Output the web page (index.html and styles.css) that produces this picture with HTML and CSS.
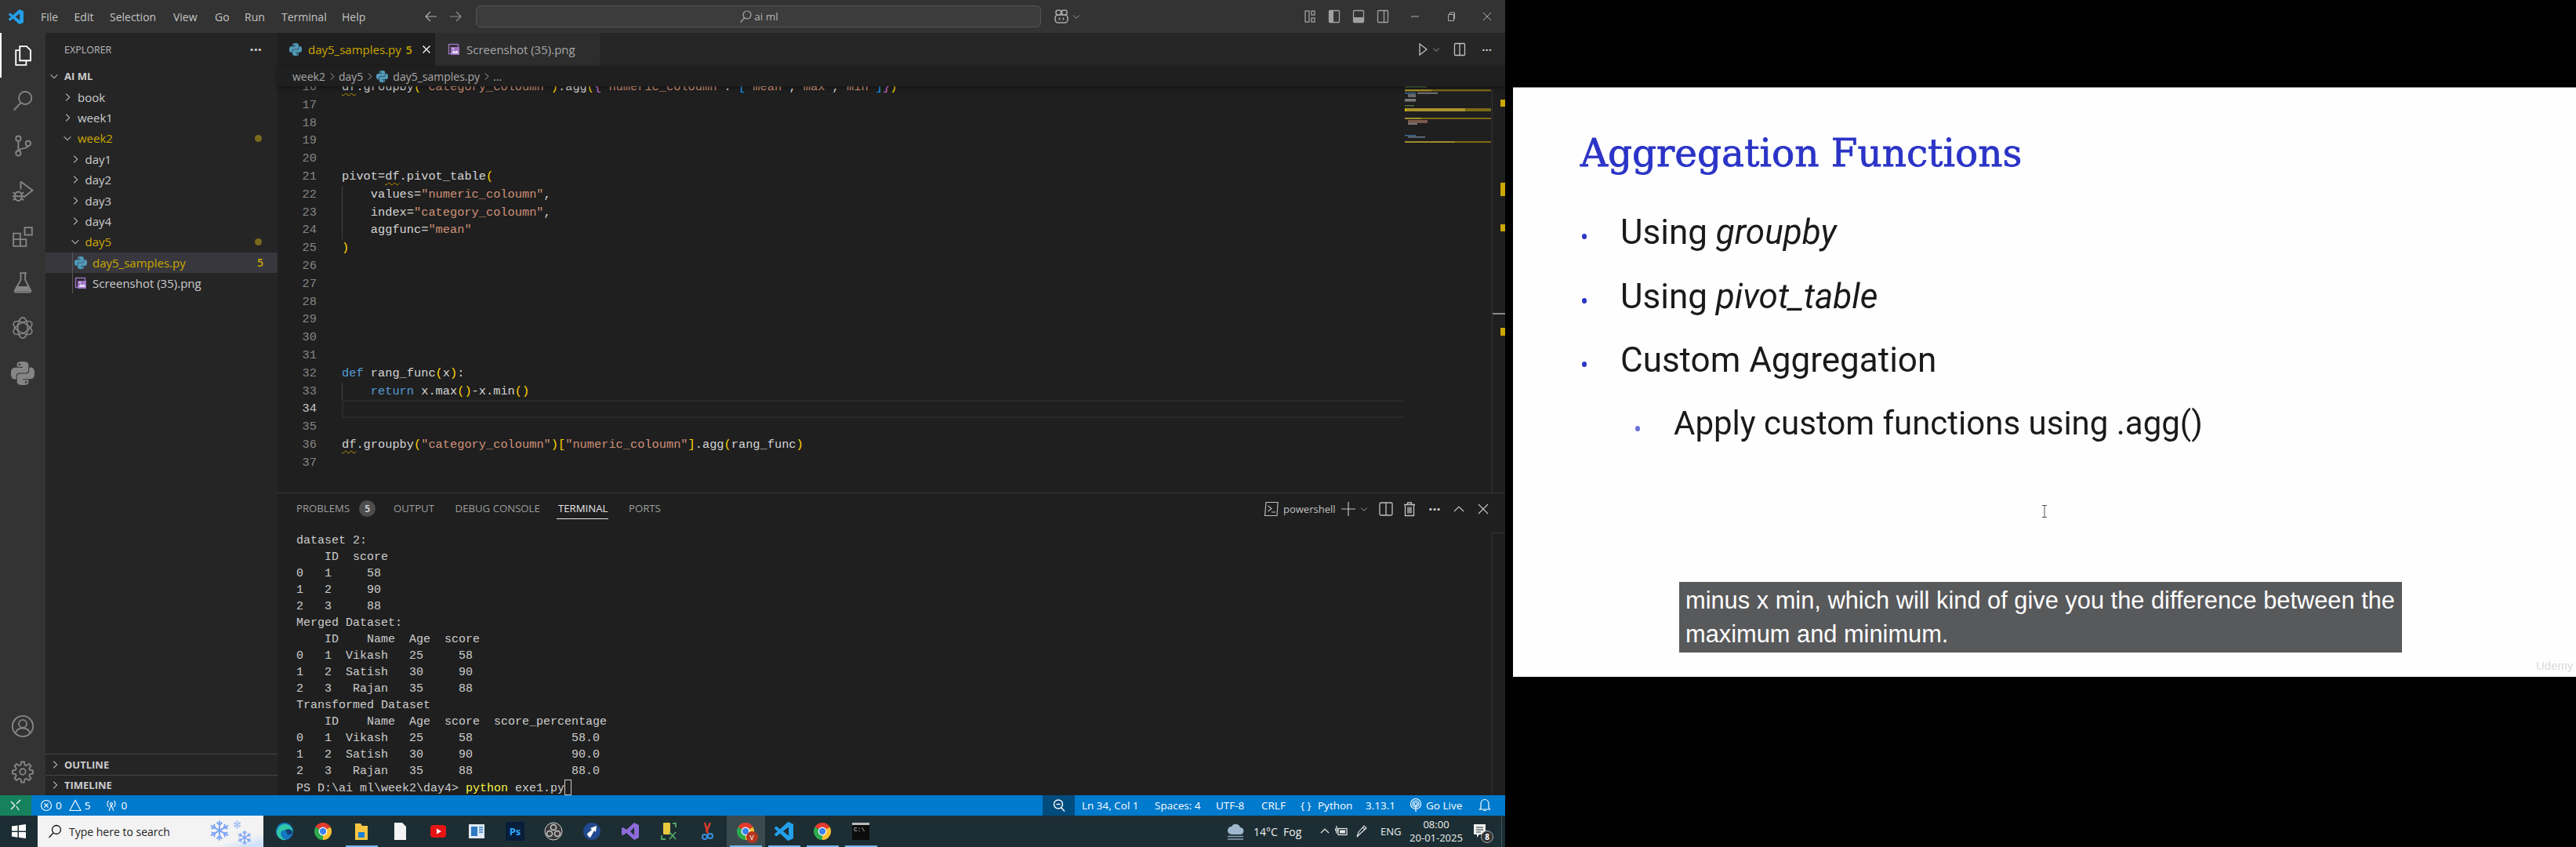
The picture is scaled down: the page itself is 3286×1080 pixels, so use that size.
FILE: index.html
```html
<!DOCTYPE html>
<html lang="en">
<head>
<meta charset="utf-8">
<title>day5_samples.py - AI ML</title>
<link rel="stylesheet" href="styles.css">
</head>
<body>
<svg class="defs" aria-hidden="true">
  <symbol id="py" viewBox="0 0 24 24"><path d="M14.25.18l.9.2.73.26.59.3.45.32.34.34.25.34.16.33.1.3.04.26.02.2-.01.13V8.5l-.05.63-.13.55-.21.46-.26.38-.3.31-.33.25-.35.19-.35.14-.33.1-.3.07-.26.04-.21.02H8.77l-.69.05-.59.14-.5.22-.41.27-.33.32-.27.35-.2.36-.15.37-.1.35-.07.32-.04.27-.02.21v3.06H3.17l-.21-.03-.28-.07-.32-.12-.35-.18-.36-.26-.36-.36-.35-.46-.32-.59-.28-.73-.21-.88-.14-1.05-.05-1.23.06-1.22.16-1.04.24-.87.32-.71.36-.57.4-.44.42-.33.42-.24.4-.16.36-.1.32-.05.24-.01h.16l.06.01h8.16v-.83H6.18l-.01-2.75-.02-.37.05-.34.11-.31.17-.28.25-.26.31-.23.38-.2.44-.18.51-.15.58-.12.64-.1.71-.06.77-.04.84-.02 1.27.05zm-6.3 1.98l-.23.33-.08.41.08.41.23.34.33.22.41.09.41-.09.33-.22.23-.34.08-.41-.08-.41-.23-.33-.33-.22-.41-.09-.41.09zm13.09 3.95l.28.06.32.12.35.18.36.27.36.35.35.47.32.59.28.73.21.88.14 1.04.05 1.23-.06 1.23-.16 1.04-.24.86-.32.71-.36.57-.4.45-.42.33-.42.24-.4.16-.36.09-.32.05-.24.02-.16-.01h-8.22v.82h5.84l.01 2.76.02.36-.05.34-.11.31-.17.29-.25.25-.31.24-.38.2-.44.17-.51.15-.58.13-.64.09-.71.07-.77.04-.84.01-1.27-.04-1.07-.14-.9-.2-.73-.25-.59-.3-.45-.33-.34-.34-.25-.34-.16-.33-.1-.3-.04-.25-.02-.2.01-.13v-5.34l.05-.64.13-.54.21-.46.26-.38.3-.32.33-.24.35-.2.35-.14.33-.1.3-.06.26-.04.21-.02.13-.01h5.84l.69-.05.59-.14.5-.21.41-.28.33-.32.27-.35.2-.36.15-.36.1-.35.07-.32.04-.28.02-.21V6.07h2.09l.14.01zm-6.47 14.25l-.23.33-.08.41.08.41.23.33.33.23.41.08.41-.08.33-.23.23-.33.08-.41-.08-.41-.23-.33-.33-.23-.41-.08-.41.08z"/></symbol>
  <symbol id="vsc" viewBox="0 0 24 24"><path d="M23.15 2.587L18.21.21a1.494 1.494 0 0 0-1.705.29l-9.46 8.63-4.12-3.128a.999.999 0 0 0-1.276.057L.327 7.261A1 1 0 0 0 .326 8.74L3.899 12 .326 15.26a1 1 0 0 0 .001 1.479L1.65 17.94a.999.999 0 0 0 1.276.057l4.12-3.128 9.46 8.63a1.492 1.492 0 0 0 1.704.29l4.942-2.377A1.5 1.5 0 0 0 24 20.06V3.939a1.5 1.5 0 0 0-.85-1.352zm-5.146 14.861L10.826 12l7.178-5.448v10.896z"/></symbol>
  <symbol id="cr" viewBox="0 0 16 16"><path d="M6 3l5 5-5 5" fill="none" stroke="currentColor" stroke-width="1.2"/></symbol>
  <symbol id="cd" viewBox="0 0 16 16"><path d="M3 6l5 5 5-5" fill="none" stroke="currentColor" stroke-width="1.2"/></symbol>
  <symbol id="img" viewBox="0 0 16 16"><rect x="1.5" y="1.5" width="12" height="12" fill="none" stroke="#a074c4" stroke-width="1.4"/><rect x="4" y="5" width="11" height="10" fill="#a074c4"/><path d="M5 13l3-4 2 2 2-2 2 4z" fill="#e6dcf2"/><circle cx="7" cy="7" r="1" fill="#e6dcf2"/></symbol>
  <symbol id="chrome" viewBox="0 0 24 24"><path d="M12 12L2.47 6.5A11 11 0 0 1 21.53 6.5z" fill="#e33b2e"/><path d="M12 12l9.53-5.5A11 11 0 0 1 12 23z" fill="#fbc02d"/><path d="M12 12v11A11 11 0 0 1 2.47 6.5z" fill="#2da94f"/><circle cx="12" cy="12" r="5.4" fill="#fff"/><circle cx="12" cy="12" r="4.2" fill="#3b82f0"/></symbol>
  <symbol id="flake" viewBox="0 0 24 24"><g stroke="currentColor" stroke-width="1.6" fill="none"><path d="M12 1v22M2.5 6.5l19 11M21.5 6.5l-19 11"/><path d="M9 3l3 3 3-3M9 21l3-3 3 3M3 10l4-1-1-4M21 14l-4 1 1 4M21 10l-4-1 1-4M3 14l4 1-1 4"/></g></symbol>
</svg>

<div class="vscode">
  <header class="titlebar">
    <div class="logo"><svg class="logo-svg"><use href="#vsc"/></svg></div>
    <nav class="menu"><span>File</span><span>Edit</span><span>Selection</span><span>View</span><span>Go</span><span>Run</span><span>Terminal</span><span>Help</span></nav>
    <div class="nav-arrows">
      <svg class="ico18" viewBox="0 0 18 18"><path d="M16 9H2M8 3L2 9l6 6" fill="none" stroke="#b0b0b0" stroke-width="1.2"/></svg>
      <svg class="ico18 dim" viewBox="0 0 18 18"><path d="M2 9h14M10 3l6 6-6 6" fill="none" stroke="#b0b0b0" stroke-width="1.2"/></svg>
    </div>
    <div class="searchbox">
      <svg class="ico18" viewBox="0 0 18 18"><circle cx="11" cy="7" r="5" fill="none" stroke="#a8a8a8" stroke-width="1.2"/><path d="M7.5 11L2.5 16.5" stroke="#a8a8a8" stroke-width="1.2"/></svg>
      <span>ai ml</span>
    </div>
    <div class="copilot">
      <svg class="ico22" viewBox="0 0 22 22"><g fill="none" stroke="#a8a8a8" stroke-width="1.6"><rect x="3" y="9" width="16" height="10" rx="4"/><rect x="4" y="3" width="6.5" height="6" rx="2.5"/><rect x="11.5" y="3" width="6.5" height="6" rx="2.5"/><path d="M8.5 12.5v3M13.5 12.5v3"/></g></svg>
      <svg class="ico12 c-grey"><use href="#cd"/></svg>
    </div>
    <div class="win-group">
      <div class="layout-btn"><svg class="ico20" viewBox="0 0 20 20"><g fill="none" stroke="#a0a0a0" stroke-width="1.3"><rect x="4" y="3" width="5" height="14"/><rect x="12" y="3" width="4" height="5"/><rect x="12" y="12" width="4" height="5"/></g></svg></div>
      <div class="layout-btn"><svg class="ico20" viewBox="0 0 20 20"><rect x="3.5" y="2.5" width="13" height="15" rx="1" fill="none" stroke="#a0a0a0" stroke-width="1.3"/><rect x="4" y="3" width="5" height="14" fill="#a0a0a0"/></svg></div>
      <div class="layout-btn"><svg class="ico20" viewBox="0 0 20 20"><rect x="3.5" y="2.5" width="13" height="15" rx="1" fill="none" stroke="#a0a0a0" stroke-width="1.3"/><rect x="4" y="11" width="12" height="6" fill="#a0a0a0"/></svg></div>
      <div class="layout-btn"><svg class="ico20" viewBox="0 0 20 20"><rect x="3.5" y="2.5" width="13" height="15" rx="1" fill="none" stroke="#a0a0a0" stroke-width="1.3"/><path d="M11.5 3v14" stroke="#a0a0a0" stroke-width="1.3"/></svg></div>
      <div class="win-btn gap-l"><svg class="ico12" viewBox="0 0 12 12"><path d="M1 6h10" stroke="#b0b0b0"/></svg></div>
      <div class="win-btn"><svg class="ico12" viewBox="0 0 12 12"><path d="M2.5 3.5h7v8h-7zM4.5 3.5v-2.5h6v8h-1" fill="none" stroke="#b0b0b0"/></svg></div>
      <div class="win-btn"><svg class="ico12" viewBox="0 0 12 12"><path d="M1 1l10 10M11 1L1 11" stroke="#b0b0b0"/></svg></div>
    </div>
  </header>

  <div class="main">
    <aside class="activity">
      <div class="act-top">
        <div class="act on"><svg class="ico30" viewBox="0 0 24 24"><g fill="none" stroke="#fff" stroke-width="1.5"><path d="M9 2.5h7l4 4V17H9z"/><path d="M9 6.5H5v15h10.5V17"/></g></svg></div>
        <div class="act"><svg class="ico30" viewBox="0 0 24 24"><g fill="none" stroke="#858585" stroke-width="1.5"><circle cx="14.5" cy="9.5" r="6.5"/><path d="M10 14.5L3 22"/></g></svg></div>
        <div class="act"><svg class="ico30" viewBox="0 0 24 24"><g fill="none" stroke="#858585" stroke-width="1.5"><circle cx="7.5" cy="4.5" r="2.5"/><circle cx="7.5" cy="19.5" r="2.5"/><circle cx="17.5" cy="9.5" r="2.5"/><path d="M7.5 7v10M17.5 12c0 3.5-10 2-10 5"/></g></svg></div>
        <div class="act"><svg class="ico30" viewBox="0 0 24 24"><g fill="none" stroke="#858585" stroke-width="1.5"><path d="M10 2l12 9-9 7"/><path d="M10 2v8"/><ellipse cx="7.5" cy="17" rx="3.6" ry="4.6"/><path d="M2 13l3 2M2 21l3-2M13 13l-3 2M13 21l-3-2M1.5 17H4M11 17h2.5M4 17h7"/></g></svg></div>
        <div class="act"><svg class="ico30" viewBox="0 0 24 24"><g fill="none" stroke="#858585" stroke-width="1.5"><path d="M2.5 8.5h7v6h6v7h-13z"/><path d="M9.5 14.5v7M2.5 14.5h7"/><rect x="14" y="2.5" width="7.5" height="7.5"/></g></svg></div>
        <div class="act"><svg class="ico30" viewBox="0 0 24 24"><g fill="none" stroke="#858585" stroke-width="1.5"><path d="M9 2.500h7M10 2.500v7L4 20c-.6 1.100 0 2 1 2h14c1 0 1.600-.9 1-2L14.500 9.500v-7"/></g><path d="M6.500 16h11l2 5h-15z" fill="#858585"/></svg></div>
        <div class="act"><svg class="ico30" viewBox="0 0 24 24"><g fill="none" stroke="#858585" stroke-width="1.300"><ellipse cx="12" cy="12" rx="5" ry="10.500"/><ellipse cx="12" cy="12" rx="5" ry="10.500" transform="rotate(60 12 12)"/><ellipse cx="12" cy="12" rx="5" ry="10.500" transform="rotate(120 12 12)"/></g></svg></div>
        <div class="act"><svg class="ico30 c-act"><use href="#py"/></svg></div>
      </div>
      <div class="act-bottom">
        <div class="act"><svg class="ico30" viewBox="0 0 24 24"><g fill="none" stroke="#858585" stroke-width="1.500"><circle cx="12" cy="12" r="10.500"/><circle cx="12" cy="9.500" r="4"/><path d="M4.500 19c1-3.500 4-5 7.500-5s6.500 1.500 7.500 5"/></g></svg></div>
        <div class="act"><svg class="ico30" viewBox="0 0 24 24"><g fill="none" stroke="#858585" stroke-width="1.500"><path d="M10.500 2h3l.5 3 1.800.8 2.500-1.800 2.100 2.100-1.800 2.500.8 1.800 3 .5v3l-3 .5-.8 1.800 1.800 2.500-2.100 2.100-2.500-1.800-1.800.8-.5 3h-3l-.5-3-1.800-.8-2.500 1.800-2.100-2.100 1.800-2.500-.8-1.800-3-.5v-3l3-.5.8-1.800L3.600 6.100l2.100-2.100 2.500 1.800 1.800-.8z"/><circle cx="12" cy="12" r="3"/></g></svg></div>
      </div>
    </aside>

    <aside class="sidebar">
      <div class="side-head"><span>EXPLORER</span><span class="dots">···</span></div>
      <div class="row ind0 bold"><svg class="chev"><use href="#cd"/></svg><span>AI ML</span></div>
      <div class="row ind1"><svg class="chev"><use href="#cr"/></svg><span>book</span></div>
      <div class="row ind1"><svg class="chev"><use href="#cr"/></svg><span>week1</span></div>
      <div class="row ind1 mod"><svg class="chev"><use href="#cd"/></svg><span>week2</span><i class="dot"></i></div>
      <div class="row ind2"><svg class="chev"><use href="#cr"/></svg><span>day1</span></div>
      <div class="row ind2"><svg class="chev"><use href="#cr"/></svg><span>day2</span></div>
      <div class="row ind2"><svg class="chev"><use href="#cr"/></svg><span>day3</span></div>
      <div class="row ind2"><svg class="chev"><use href="#cr"/></svg><span>day4</span></div>
      <div class="row ind2 mod"><svg class="chev"><use href="#cd"/></svg><span>day5</span><i class="dot"></i></div>
      <div class="row ind3 mod sel"><svg class="ficon c-py"><use href="#py"/></svg><span>day5_samples.py</span><b class="count">5</b></div>
      <div class="row ind3"><svg class="ficon"><use href="#img"/></svg><span>Screenshot (35).png</span></div>
      <div class="side-space"></div>
      <div class="sec"><svg class="chev"><use href="#cr"/></svg><span>OUTLINE</span></div>
      <div class="sec"><svg class="chev"><use href="#cr"/></svg><span>TIMELINE</span></div>
    </aside>

    <section class="work">
      <div class="tabs">
        <div class="tab active mod"><svg class="ficon c-py"><use href="#py"/></svg><span>day5_samples.py</span><b class="tabcount">5</b><svg class="tabx" viewBox="0 0 12 12"><path d="M1.500 1.500l9 9M10.500 1.500l-9 9" stroke="#fff" stroke-width="1.300"/></svg></div>
        <div class="tab other"><svg class="ficon"><use href="#img"/></svg><span>Screenshot (35).png</span></div>
        <div class="tab-actions">
          <svg class="ico18" viewBox="0 0 18 18"><path d="M5 2l9 7-9 7z" fill="none" stroke="#c0c0c0" stroke-width="1.300"/></svg>
          <svg class="ico12 c-grey"><use href="#cd"/></svg>
          <svg class="ico18 split" viewBox="0 0 18 18"><rect x="2.500" y="1.500" width="13" height="15" rx="1" fill="none" stroke="#c0c0c0" stroke-width="1.300"/><path d="M9 2v14" stroke="#c0c0c0" stroke-width="1.300"/></svg>
          <span class="dots tight">···</span>
        </div>
      </div>
      <div class="crumbs"><span>week2</span><svg class="crumb-c"><use href="#cr"/></svg><span>day5</span><svg class="crumb-c"><use href="#cr"/></svg><svg class="ficon c-py"><use href="#py"/></svg><span>day5_samples.py</span><svg class="crumb-c"><use href="#cr"/></svg><span>...</span></div>

      <div class="editor">
        <div class="lines">
          <div class="ln"><span class="no">16</span><span class="code"><u>df</u>.groupby<y>(</y><s>"category_coloumn"</s><y>)</y>.agg<y>(</y><p>{</p><s>"numeric_coloumn"</s>: <a>[</a><s>"mean"</s>,<s>"max"</s>,<s>"min"</s><a>]</a><p>}</p><y>)</y></span></div>
          <div class="ln"><span class="no">17</span><span class="code"></span></div>
          <div class="ln"><span class="no">18</span><span class="code"></span></div>
          <div class="ln"><span class="no">19</span><span class="code"></span></div>
          <div class="ln"><span class="no">20</span><span class="code"></span></div>
          <div class="ln"><span class="no">21</span><span class="code">pivot=<u>df</u>.pivot_table<y>(</y></span></div>
          <div class="ln"><span class="no">22</span><span class="code guide">    values=<s>"numeric_coloumn"</s>,</span></div>
          <div class="ln"><span class="no">23</span><span class="code guide">    index=<s>"category_coloumn"</s>,</span></div>
          <div class="ln"><span class="no">24</span><span class="code guide">    aggfunc=<s>"mean"</s></span></div>
          <div class="ln"><span class="no">25</span><span class="code"><y>)</y></span></div>
          <div class="ln"><span class="no">26</span><span class="code"></span></div>
          <div class="ln"><span class="no">27</span><span class="code"></span></div>
          <div class="ln"><span class="no">28</span><span class="code"></span></div>
          <div class="ln"><span class="no">29</span><span class="code"></span></div>
          <div class="ln"><span class="no">30</span><span class="code"></span></div>
          <div class="ln"><span class="no">31</span><span class="code"></span></div>
          <div class="ln"><span class="no">32</span><span class="code"><k>def</k> rang_func<y>(</y>x<y>)</y>:</span></div>
          <div class="ln"><span class="no">33</span><span class="code guide">    <k>return</k> x.max<y>()</y>-x.min<y>()</y></span></div>
          <div class="ln current"><span class="no">34</span><span class="code"></span></div>
          <div class="ln"><span class="no">35</span><span class="code"></span></div>
          <div class="ln"><span class="no">36</span><span class="code"><u>df</u>.groupby<y>(</y><s>"category_coloumn"</s><y>)[</y><s>"numeric_coloumn"</s><y>]</y>.agg<y>(</y>rang_func<y>)</y></span></div>
          <div class="ln"><span class="no">37</span><span class="code"></span></div>
        </div>
        <svg class="minimap" viewBox="0 0 128 518">
          <rect x="0" y="0" width="28" height="1.500" fill="#4d6b3c"/>
          <rect x="0" y="4" width="110" height="2.300" fill="#7b6a14"/><rect x="0" y="4" width="34" height="2.300" fill="#a08c2a"/>
          <rect x="0" y="8" width="14" height="1.500" fill="#3f6c93"/><rect x="16" y="8" width="26" height="1.500" fill="#8a8a8a"/>
          <rect x="4" y="10" width="10" height="4" fill="#6a6a6a"/>
          <rect x="0" y="16" width="14" height="3.500" fill="#7a7a7a"/>
          <rect x="0" y="24" width="12" height="1.500" fill="#4d6b3c"/>
          <rect x="0" y="28" width="110" height="4" fill="#7b6a14"/><rect x="0" y="28" width="77" height="4" fill="#a8922c"/><rect x="0" y="28" width="2" height="4" fill="#d4b000"/>
          <rect x="0" y="40" width="110" height="2" fill="#7b6a14"/><rect x="0" y="40" width="21" height="2" fill="#a08c2a"/>
          <rect x="4" y="43" width="25" height="4" fill="#7a5a4c"/><rect x="4" y="47" width="12" height="2" fill="#777"/>
          <rect x="0" y="62" width="14" height="1.500" fill="#3f6c93"/><rect x="4" y="64" width="22" height="1.500" fill="#6f7f90"/>
          <rect x="0" y="70" width="110" height="2" fill="#7b6a14"/><rect x="0" y="70" width="64" height="2" fill="#a08c2a"/>
          <path d="M111.500 0V518" stroke="#333"/>
          <rect x="122" y="17" width="6" height="9" fill="#cca700"/>
          <rect x="122" y="123" width="6" height="17" fill="#cca700"/>
          <rect x="122" y="176" width="6" height="9" fill="#cca700"/>
          <rect x="112" y="289" width="16" height="2" fill="#8a8a8a"/>
          <rect x="122" y="308" width="6" height="10" fill="#cca700"/>
        </svg>
      </div>

      <div class="panel">
        <div class="panel-head">
          <div class="ptabs">
            <div class="ptab">PROBLEMS<b class="badge">5</b></div>
            <div class="ptab">OUTPUT</div>
            <div class="ptab">DEBUG CONSOLE</div>
            <div class="ptab on">TERMINAL</div>
            <div class="ptab">PORTS</div>
          </div>
          <div class="pacts">
            <svg class="ico20" viewBox="0 0 20 20"><g fill="none" stroke="#c0c0c0" stroke-width="1.100"><path d="M3 1.500h15l-1 17H1.500z"/><path d="M5.500 6l4.500 3.500-4.500 3.500M10 14h5"/></g></svg>
            <span class="pshell">powershell</span>
            <svg class="ico20 plus" viewBox="0 0 20 20"><path d="M10 1v18M1 10h18" stroke="#c0c0c0" stroke-width="1.200"/></svg>
            <svg class="ico12 c-grey pchev"><use href="#cd"/></svg>
            <svg class="ico20 psplit" viewBox="0 0 20 20"><rect x="2" y="2" width="16" height="16" rx="1.500" fill="none" stroke="#c0c0c0" stroke-width="1.300"/><path d="M10 2v16" stroke="#c0c0c0" stroke-width="1.300"/></svg>
            <svg class="ico20 ptrash" viewBox="0 0 20 20"><g fill="none" stroke="#c0c0c0" stroke-width="1.300"><path d="M3 4.500h14M7.500 4.500V2h5v2.500M4.500 4.500v14h11v-14M8 7.500v8M10 7.500v8M12 7.500v8"/></g></svg>
            <span class="dots pdots">···</span>
            <svg class="ico16 pup" viewBox="0 0 16 16"><path d="M2 11l6-6 6 6" fill="none" stroke="#c0c0c0" stroke-width="1.200"/></svg>
            <svg class="ico16 px" viewBox="0 0 16 16"><path d="M2 2l12 12M14 2L2 14" stroke="#c0c0c0" stroke-width="1.200"/></svg>
          </div>
        </div>
        <div class="term-wrap">
<pre class="term">dataset 2:
    ID  score
0   1     58
1   2     90
2   3     88
Merged Dataset:
    ID    Name  Age  score
0   1  Vikash   25     58
1   2  Satish   30     90
2   3   Rajan   35     88
Transformed Dataset
    ID    Name  Age  score  score_percentage
0   1  Vikash   25     58              58.0
1   2  Satish   30     90              90.0
2   3   Rajan   35     88              88.0
PS D:\ai ml\week2\day4&gt; <em>python</em> exe1.py<i class="cursor"></i></pre>
          <div class="term-rail"></div>
        </div>
      </div>
    </section>
  </div>

  <footer class="status">
    <div class="remote"><svg class="ico16" viewBox="0 0 16 16"><path d="M2 3l5 5-5 5M14 1L9 6M9 9l3 5" fill="none" stroke="#fff" stroke-width="1.200"/></svg></div>
    <div class="st-left">
      <svg class="ico16" viewBox="0 0 16 16"><g fill="none" stroke="#fff" stroke-width="1.100"><circle cx="8" cy="8" r="6.500"/><path d="M5.500 5.500l5 5M10.500 5.500l-5 5"/></g></svg><span>0</span>
      <svg class="ico16 st-gap" viewBox="0 0 16 16"><path d="M8 1.500L15 14.500H1z" fill="none" stroke="#fff" stroke-width="1.100"/></svg><span>5</span>
      <svg class="ico16 st-gap2" viewBox="0 0 16 16"><g fill="none" stroke="#fff" stroke-width="1.100"><circle cx="8" cy="6" r="1.500"/><path d="M8 7.500L5 15M8 7.500l3 7.500M4.500 2c-2 2-2 6 0 8M11.500 2c2 2 2 6 0 8"/></g></svg><span>0</span>
    </div>
    <div class="st-right">
      <div class="st-zoom"><svg class="ico18" viewBox="0 0 18 18"><g fill="none" stroke="#fff" stroke-width="1.400"><circle cx="8" cy="7.500" r="5.500"/><path d="M5.500 7.500h5M11.500 11.500l4.500 5"/></g></svg></div>
      <span>Ln 34, Col 1</span><span>Spaces: 4</span><span>UTF-8</span><span>CRLF</span><span>{ }</span><span>Python</span><span>3.13.1</span>
      <svg class="ico18" viewBox="0 0 18 18"><g fill="none" stroke="#fff" stroke-width="1.200"><circle cx="9" cy="7" r="2"/><circle cx="9" cy="7" r="4"/><circle cx="9" cy="7" r="6.500"/><path d="M9 9v8"/></g></svg>
      <span>Go Live</span>
      <svg class="ico18" viewBox="0 0 18 18"><path d="M9 1.500c-3 0-5 2.500-5 5.500v5l-1.500 2h13L14 12V7c0-3-2-5.500-5-5.500zM7.500 15.500h3" fill="none" stroke="#fff" stroke-width="1.200"/></svg>
    </div>
  </footer>

  <div class="taskbar">
    <div class="start"><svg class="ico20" viewBox="0 0 20 20"><path d="M1 3.500l7.500-1V9.500H1zM10 2.300L19 1v8.500h-9zM1 11h7.500v6.700L1 16.500zM10 11h9v8l-9-1.200z" fill="#fff"/></svg></div>
    <div class="tsearch">
      <svg class="ico20" viewBox="0 0 20 20"><g fill="none" stroke="#111" stroke-width="1.300"><circle cx="12" cy="8" r="5.500"/><path d="M8 12L2.500 18"/></g></svg>
      <span>Type here to search</span>
      <div class="flakes">
        <svg class="f1"><use href="#flake"/></svg>
        <svg class="f2"><use href="#flake"/></svg>
        <svg class="f3"><use href="#flake"/></svg>
      </div>
    </div>
    <div class="apps">
      <div class="app"><svg class="ico24" viewBox="0 0 24 24"><circle cx="12" cy="12" r="11" fill="#1277c4"/><path d="M2 13C3 6 9 2 14 3c5 1 9 5 8 11-1 3-4 3-6 2-2-1-1-4-4-5-4-1-6 3-4 7 1 2 3 4 6 5C7 24 2 19 2 13z" fill="#2fc7a8"/><path d="M22 14c-1 3-4 3-6 2-2-1-1-4-4-5 4-3 10-2 10 3z" fill="#123f78"/></svg></div>
      <div class="app"><svg class="ico24"><use href="#chrome"/></svg></div>
      <div class="app run"><svg class="ico24" viewBox="0 0 24 24"><path d="M4 2h7l2 3h7v18H4z" fill="#f5c542"/><rect x="8" y="13" width="8" height="7" fill="#1c7ed6"/></svg></div>
      <div class="app"><svg class="ico24" viewBox="0 0 24 24"><path d="M5 1h10l5 5v17H5z" fill="#f4f4f4"/></svg></div>
      <div class="app"><svg class="ico24" viewBox="0 0 24 24"><rect x="2" y="4" width="20" height="16" rx="4" fill="#e81515"/><path d="M10 8.500l6 3.500-6 3.500z" fill="#fff"/></svg></div>
      <div class="app"><svg class="ico24" viewBox="0 0 24 24"><rect x="2" y="3" width="20" height="18" fill="#dfe9f3"/><rect x="5" y="6" width="8" height="12" fill="#2b79c2"/><path d="M15 7h5M15 10h5M15 13h5" stroke="#2b79c2" stroke-width="1.500"/></svg></div>
      <div class="app"><span class="ps">Ps</span></div>
      <div class="app"><svg class="ico24" viewBox="0 0 24 24"><circle cx="12" cy="12" r="11" fill="#3a3a3a" stroke="#cfcfcf"/><circle cx="12" cy="7" r="3.500" fill="none" stroke="#cfcfcf" stroke-width="1.500"/><circle cx="7" cy="15" r="3.500" fill="none" stroke="#cfcfcf" stroke-width="1.500"/><circle cx="17" cy="15" r="3.500" fill="none" stroke="#cfcfcf" stroke-width="1.500"/></svg></div>
      <div class="app"><svg class="ico24" viewBox="0 0 24 24"><circle cx="12" cy="12" r="11" fill="#21498f"/><path d="M6 15l6-5-2-2 8-3-1 8-2-2-5 9c-2-1-4-3-4-5z" fill="#fff"/></svg></div>
      <div class="app"><svg class="ico24" viewBox="0 0 24 24"><path d="M17 1l6 3v16l-6 3L7 14l-4 3-2-1V8l2-1 4 3zM17 7l-5 5 5 5z" fill="#8e6bd8"/></svg></div>
      <div class="app"><svg class="ico24" viewBox="0 0 24 24"><rect x="5" y="1" width="9" height="15" rx="1" fill="#e9c840"/><path d="M17 2h4v5M3 17v5h5M13 13l8 9M21 13l-8 9" fill="none" stroke="#54a868" stroke-width="1.800"/></svg></div>
      <div class="app"><svg class="ico24" viewBox="0 0 24 24"><path d="M9 1l4 14M16 1l-5 12" stroke="#d83a2a" stroke-width="2.500"/><circle cx="9" cy="19" r="3" fill="none" stroke="#3a8dde" stroke-width="2"/><circle cx="16" cy="18" r="3" fill="none" stroke="#3a8dde" stroke-width="2"/></svg></div>
      <div class="app run cur"><svg class="ico24"><use href="#chrome"/></svg><span class="avatar">v</span></div>
      <div class="app run"><svg class="ico24 c-vsc"><use href="#vsc"/></svg></div>
      <div class="app run"><svg class="ico24"><use href="#chrome"/></svg></div>
      <div class="app run"><span class="cmd">C:\</span></div>
    </div>
    <div class="tray">
      <svg class="ico24" viewBox="0 0 24 24"><path d="M7 16a5 5 0 0 1 0-10 6 6 0 0 1 11 1 4.500 4.500 0 0 1 0 9z" fill="#9fb6cf"/><path d="M2 18.500h20M2 22h20" stroke="#8a9fb8" stroke-width="1.500"/></svg>
      <span class="weather">14°C&nbsp; Fog</span>
      <svg class="ico12" viewBox="0 0 12 12"><path d="M1 8l5-5 5 5" fill="none" stroke="#e8e8e8" stroke-width="1.200"/></svg>
      <svg class="ico16" viewBox="0 0 16 16"><g fill="none" stroke="#e8e8e8" stroke-width="1.200"><rect x="4" y="4.500" width="11" height="8"/><path d="M2 1v4M.5 5h3v2H.5zM2 7v4"/></g><rect x="6" y="6.500" width="7" height="4" fill="#e8e8e8"/></svg>
      <svg class="ico16" viewBox="0 0 16 16"><g fill="none" stroke="#e8e8e8" stroke-width="1.100"><path d="M2 15l2-6 7-8 3 3-8 7zM9 3l3 3"/></g></svg>
      <span class="eng">ENG</span>
      <div class="clock"><span>08:00</span><span>20-01-2025</span></div>
      <div class="notif"><svg class="ico20" viewBox="0 0 20 20"><path d="M2 1h15v13H9l-3 4v-4H2z" fill="#f0f0f0"/><path d="M5 5h9M5 8h9M5 11h6" stroke="#1c2e33" stroke-width="1.200"/></svg><b class="nbadge">8</b></div>
    </div>
  </div>
</div>

<div class="stage">
  <div class="slide">
    <h1 class="s-title">Aggregation Functions</h1>
    <ul class="s-list">
      <li>Using <em>groupby</em></li>
      <li>Using <em>pivot_table</em></li>
      <li>Custom Aggregation</li>
      <li class="sub">Apply custom functions using .agg()</li>
    </ul>
    <svg class="ibeam" viewBox="0 0 8 16"><path d="M1 .5h6M4 .5v15M1 15.500h6" fill="none" stroke="#555"/></svg>
    <div class="caption">minus x min, which will kind of give you the difference between the<br>maximum and minimum.</div>
    <span class="mark">Udemy</span>
  </div>
</div>
</body>
</html>
```
FILE: styles.css
```css
* { box-sizing: border-box; }
html, body { margin: 0; padding: 0; height: 100%; }
body { display: flex; width: 3286px; height: 1080px; overflow: hidden; background: #000; font-family: "Open Sans", "Noto Sans", sans-serif; color: #ccc; }
.defs { position: absolute; width: 0; height: 0; }
svg { display: block; flex: none; }
.ico12 { width: 12px; height: 12px; }
.ico16 { width: 16px; height: 16px; }
.ico18 { width: 18px; height: 18px; }
.ico20 { width: 20px; height: 20px; }
.ico22 { width: 22px; height: 22px; }
.ico24 { width: 24px; height: 24px; }
.ico30 { width: 30px; height: 30px; }
.c-grey { color: #a8a8a8; }
.c-act { fill: #858585; }
.c-py { fill: #519aba; }
.c-vsc { fill: #23a0ea; }
.dim { opacity: .75; }

.vscode { width: 1920px; flex: none; height: 1080px; display: flex; flex-direction: column; }

/* title bar */
.titlebar { height: 42px; flex: none; background: #333; display: flex; align-items: center; font-size: 14px; }
.logo { width: 52px; padding-left: 11px; }
.logo-svg { width: 19px; height: 19px; fill: #23a0ea; }
.menu { width: 484px; display: grid; grid-template-columns: 42.6px 45.4px 81px 53px 38px 47px 77px 100px; color: #c4c4c4; }
.nav-arrows { width: 71px; display: flex; gap: 13px; padding-left: 5px; }
.searchbox { width: 721px; height: 28px; background: #3c3c3c; border: 1px solid #555; border-radius: 6px; display: flex; align-items: center; justify-content: center; gap: 2px; color: #b4b4b4; font-size: 13.5px; }
.copilot { display: flex; align-items: center; margin-left: 15px; gap: 2px; }
.win-group { margin-left: auto; display: flex; align-items: center; }
.layout-btn { width: 31px; display: flex; justify-content: center; }
.win-btn { width: 46px; display: flex; justify-content: center; }
.gap-l { margin-left: 2.5px; }

.main { flex: 1; min-height: 0; display: flex; }

/* activity bar */
.activity { width: 58px; flex: none; background: #333; display: flex; flex-direction: column; justify-content: space-between; padding-bottom: 1px; }
.act { height: 58px; display: flex; align-items: center; justify-content: center; }
.act.on { border-left: 2px solid #fff; padding-right: 2px; height: 57px; }

/* sidebar */
.sidebar { width: 296px; flex: none; background: #252526; display: flex; flex-direction: column; font-size: 15px; }
.side-head { height: 42px; flex: none; padding: 0 20px 0 24px; display: flex; align-items: center; justify-content: space-between; font-size: 12.5px; color: #bbb; }
.dots { font-size: 18px; font-weight: 700; letter-spacing: 0; line-height: 1; color: #c8c8c8; }
.row { position: relative; height: 26.4px; flex: none; display: flex; align-items: center; }
.chev { width: 14px; height: 14px; color: #c8c8c8; margin-right: 6px; flex: none; }
.ficon { width: 16px; height: 16px; flex: none; }
.ind0 { padding-left: 4px; }
.ind1 { padding-left: 21px; }
.ind2 { padding-left: 30.5px; }
.ind3 { padding-left: 37px; }
.ind3 .ficon { margin-right: 7px; }
.ind3::before { content: ""; position: absolute; left: 34px; top: 0; bottom: 0; width: 1px; background: #585858; }
.bold { font-weight: 700; font-size: 13px; }
.mod { color: #cca700; }
.sel { background: #37373d; }
.dot { position: absolute; left: 267px; top: 9px; width: 9px; height: 9px; border-radius: 50%; background: #7a6a1c; }
.count { position: absolute; left: 270px; font-weight: 600; font-size: 14px; }
.side-space { flex: 1; }
.sec { height: 26.5px; flex: none; border-top: 1px solid #444; display: flex; align-items: center; padding-left: 5px; font-weight: 700; font-size: 13px; color: #ccc; }
.sec .chev { margin-right: 5px; }

/* editor column */
.work { flex: 1; min-width: 0; display: flex; flex-direction: column; background: #1f1f1f; }
.tabs { height: 42px; flex: none; display: flex; background: #262626; font-size: 15px; }
.tab { display: flex; align-items: center; height: 42px; }
.tab.active { width: 201px; background: #1f1f1f; padding-left: 15px; }
.tab.active .ficon { margin-right: 8px; }
.tabcount { margin-left: 6px; font-weight: 600; font-size: 14px; }
.tabx { width: 12px; height: 12px; margin-left: 12px; }
.tab.other { width: 210px; background: #2d2d2d; padding-left: 16px; color: #a8a8a8; }
.tab.other .ficon { margin-right: 8px; }
.tab-actions { margin-left: auto; display: flex; align-items: center; padding-right: 17px; gap: 2px; }
.split { margin-left: 13px; }
.tight { margin-left: 17px; font-size: 15px; }
.crumbs { height: 26px; flex: none; display: flex; align-items: center; padding-left: 19px; font-size: 14px; color: #a8a8a8; background: #1f1f1f; position: relative; z-index: 1; box-shadow: 0 2px 5px rgba(0,0,0,.4); }
.crumb-c { width: 13px; height: 13px; margin: 0 2px; }
.crumbs .ficon { margin-right: 6px; width: 15px; height: 15px; }

.editor { height: 518px; flex: none; position: relative; overflow: hidden; font-family: "Liberation Mono", monospace; font-size: 15.33px; color: #d4d4d4; }
.lines { margin-top: -10px; }
.ln { display: flex; height: 22.8px; line-height: 22.8px; }
.no { width: 50px; flex: none; text-align: right; color: #858585; }
.code { flex: 1; margin: 0 130px 0 32px; white-space: pre; }
.guide { box-shadow: inset 1px 0 #404040; }
.current .no { color: #c6c6c6; }
.current .code { border: 2px solid #2a2a2a; border-right: 0; }
.code s { color: #ce9178; text-decoration: none; }
.code y, .code p, .code a, .code k, .code u { display: inline; margin: 0; }
.code y { color: #ffd700; }
.code p { color: #da70d6; }
.code a { color: #179fff; }
.code k { color: #569cd6; }
.code u { text-decoration: underline wavy #b89500 1px; text-underline-offset: 3px; }
.minimap { position: absolute; left: 1438px; top: 0; width: 128px; height: 518px; }

/* panel */
.panel { flex: 1; min-height: 0; border-top: 1px solid #3c3c3c; display: flex; flex-direction: column; position: relative; }
.panel-head { height: 50px; flex: none; display: flex; padding-left: 24px; }
.ptabs { width: 1234px; flex: none; display: grid; grid-template-columns: 124px 78.6px 131.4px 90px auto; font-size: 13.2px; color: #9d9d9d; }
.ptab { height: 34px; padding-top: 9px; display: flex; align-items: flex-start; line-height: 20px; }
.ptab.on { color: #e7e7e7; position: relative; }
.ptab.on::after { content: ""; position: absolute; left: -2px; width: 66px; top: 32px; height: 1px; background: #e7e7e7; }
.badge { display: flex; align-items: center; justify-content: center; width: 21px; height: 21px; border-radius: 50%; background: #4d4d4d; color: #e0e0e0; margin-left: 12px; font-size: 12px; font-weight: 600; }
.pacts { display: flex; align-items: center; height: 40px; }
.pshell { font-size: 13px; color: #c0c0c0; margin-left: 5px; width: 73px; white-space: nowrap; }
.pchev { margin-left: 4px; }
.psplit { margin-left: 12px; }
.ptrash { margin-left: 10px; }
.pdots { margin-left: 12px; width: 20px; text-align: center; }
.pup { margin-left: 13px; }
.px { margin-left: 15px; }
.term-wrap { flex: 1; min-height: 0; display: flex; }
.term { margin: 0; flex: 1; padding-left: 24px; font-family: "Liberation Mono", monospace; font-size: 15px; line-height: 21px; color: #ccc; }
.term em { font-style: normal; color: #f5f543; }
.cursor { display: inline-block; width: 9px; height: 20px; border: 1px solid #ccc; vertical-align: -5px; }
.term-rail { width: 17px; flex: none; border-left: 1px solid #333; border-top: 1px solid #333; }

/* status bar */
.status { height: 26px; flex: none; background: #007acc; color: #fff; display: flex; align-items: center; font-size: 13.5px; }
.remote { width: 40px; height: 26px; background: #16825d; display: flex; align-items: center; justify-content: center; }
.st-left { width: 1290px; display: flex; align-items: center; padding-left: 11px; gap: 4px; }
.st-gap { margin-left: 5px; }
.st-gap2 { margin-left: 15px; }
.st-right { display: grid; grid-template-columns: 41px 102px 78px 58px 50px 22px 61px 55px 22px 66px 35px; align-items: center; height: 26px; width: 590px; }
.st-zoom { height: 26px; background: #004c7d; display: flex; align-items: center; justify-content: center; }
.st-right .st-zoom + span { padding-left: 9px; }

/* taskbar */
.taskbar { height: 40px; flex: none; background: #1c2e33; display: flex; color: #f0f0f0; font-size: 14px; }
.start { width: 48px; display: flex; align-items: center; justify-content: center; }
.tsearch { width: 288px; background: #f3f3f3; display: flex; align-items: center; padding-left: 12px; gap: 8px; color: #222; position: relative; overflow: hidden; }
.flakes { position: absolute; right: 0; top: 0; bottom: 0; width: 75px; background: linear-gradient(165deg, #f3f3f3 70%, #cfe2fb 90%); color: #7ba3f3; }
.flakes svg { position: absolute; }
.f1 { left: 5px; top: 5px; width: 28px; height: 28px; }
.f2 { left: 36px; top: 6px; width: 11px; height: 11px; }
.f3 { left: 41px; top: 18px; width: 20px; height: 20px; }
.apps { display: flex; padding-left: 2.5px; }
.app { width: 49px; height: 40px; display: flex; align-items: center; justify-content: center; position: relative; }
.app.run::after { content: ""; position: absolute; left: 4px; right: 4px; bottom: 0; height: 2px; background: #76b9ed; }
.app.cur { background: #3a4b50; }
.ps { width: 24px; height: 24px; background: #061e3a; color: #31a8ff; font: 700 13px/24px "Open Sans", sans-serif; text-align: center; }
.avatar { position: absolute; left: 25px; top: 20px; width: 15px; height: 15px; border-radius: 50%; background: #b5361f; color: #fff; font-size: 10px; line-height: 14px; text-align: center; }
.cmd { width: 22px; height: 22px; background: #0c0c0c; border-top: 3px solid #bbb; color: #ddd; font: 8px/12px "Liberation Mono", monospace; padding-left: 2px; }
.tray { margin-left: auto; width: 355px; display: grid; grid-template-columns: 35px 85px 19px 26px 32px 38px 66px 44px; align-items: center; font-size: 14px; padding-left: 3px; border-right: 1px solid #40545a; margin-right: 4px; white-space: nowrap; }
.clock { display: flex; flex-direction: column; align-items: center; font-size: 13px; line-height: 17px; }
.eng { font-size: 13px; }
.notif { position: relative; padding-left: 13px; }
.nbadge { position: absolute; left: 24px; top: 9px; width: 16px; height: 16px; border-radius: 50%; background: #333; border: 1px solid #aaa; font-size: 10px; line-height: 14px; text-align: center; color: #fff; }

/* slide */
.stage { flex: 1; min-width: 0; padding: 111px 0 0 10px; }
.slide { position: relative; height: 752px; background: #fefefe; border-top: 1px solid #8a8a8a; padding: 58px 0 0 86px; }
.s-title { margin: 0; height: 50px; font: 400 48.5px/50px "DejaVu Serif", serif; color: #2b34c6; -webkit-text-stroke: .8px #2b34c6; white-space: nowrap; filter: blur(.4px); }
.s-list { list-style: none; margin: 36px 0 0; padding: 0; font-family: Roboto, sans-serif; font-size: 44px; color: #1a1a1a; filter: blur(.4px); }
.s-list li { height: 81.5px; line-height: 81.5px; padding-left: 51px; position: relative; }
.s-list li::before { content: ""; position: absolute; left: 2px; top: 42px; width: 6px; height: 7px; border-radius: 50%; background: #2b34c6; }
.s-list .sub { padding-left: 119px; font-size: 42px; line-height: 78px; }
.s-list .sub::before { left: 70px; background: #6a70d8; }
.ibeam { position: absolute; left: 674px; top: 532px; width: 8px; height: 16px; }
.caption { position: absolute; left: 212px; top: 630px; width: 922px; height: 90px; background: #58595b; color: #fff; font: 400 30.8px/43px "Liberation Sans", Arial, sans-serif; padding: 2px 0 0 8px; white-space: nowrap; }
.mark { position: absolute; left: 1305px; top: 728px; font: 400 15px "Liberation Sans", sans-serif; color: #d8d8d8; filter: blur(.5px); }
```
